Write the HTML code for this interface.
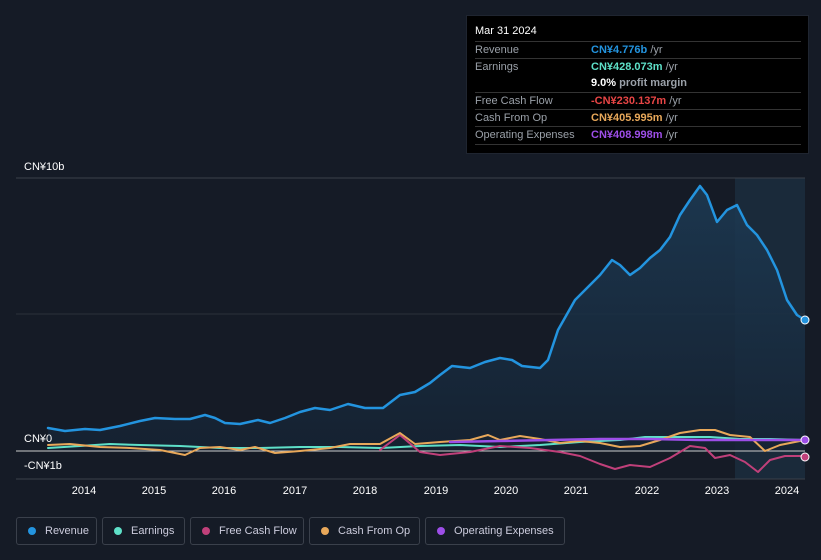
<!DOCTYPE html>
<html><head><meta charset="utf-8"><style>
body{margin:0;background:#151b26;width:821px;height:560px;overflow:hidden;font-family:"Liberation Sans",sans-serif;position:relative}
.tip{position:absolute;left:466px;top:15px;width:343px;height:139px;background:#000;border:1px solid #1f2530;box-sizing:border-box}
.tip .d{position:absolute;left:8px;top:9px;color:#fff;font-size:11px}
.row{position:absolute;left:8px;width:326px;height:17px;border-top:1px solid #333;font-size:11px;color:#9aa0a8;line-height:16px}
.row span{position:absolute;left:116px}
.leg{position:absolute;top:517px;height:28px;border:1px solid #3a404b;border-radius:3px;box-sizing:border-box;color:#ccd;font-size:11px;line-height:26px;padding-left:28px}
.leg i{position:absolute;left:11px;top:9px;width:8px;height:8px;border-radius:50%}
.ax{position:absolute;color:#fff;font-size:11px}
.yr{position:absolute;top:485px;color:#fff;font-size:11px;width:40px;text-align:center}
</style></head><body>
<svg width="821" height="560" style="position:absolute;left:0;top:0">
<defs><linearGradient id="g" x1="0" y1="0" x2="0" y2="1"><stop offset="0" stop-color="#1d3b55"/><stop offset="1" stop-color="#152232"/></linearGradient></defs>
<rect x="735" y="178" width="70" height="301" fill="#1a2a3a"/>
<line x1="16" y1="178" x2="805" y2="178" stroke="#3a404b"/>
<line x1="16" y1="314" x2="805" y2="314" stroke="#2a303b"/>
<line x1="16" y1="479" x2="805" y2="479" stroke="#3a404b"/>
<path d="M48,428 L65,431 85,429 100,430 120,426 140,421 155,418 175,419 190,419 205,415 215,418 225,423 240,424 258,420 270,423 285,418 300,412 315,408 330,410 348,404 365,408 383,408 400,395 415,392 430,383 440,375 452,366 470,368 485,362 500,358 512,360 522,366 540,368 548,360 558,330 575,300 590,285 600,275 612,260 620,265 630,275 640,268 650,258 660,250 670,237 680,215 690,200 700,186 707,195 717,222 727,210 737,205 747,225 757,235 767,250 777,270 787,300 797,315 805,320 L805,451 48,451Z" fill="url(#g)" opacity="0.85"/>
<line x1="16" y1="451" x2="805" y2="451" stroke="#ccc"/>
<g stroke-linejoin="round" stroke-linecap="round" fill="none">
<path d="M48,428 L65,431 85,429 100,430 120,426 140,421 155,418 175,419 190,419 205,415 215,418 225,423 240,424 258,420 270,423 285,418 300,412 315,408 330,410 348,404 365,408 383,408 400,395 415,392 430,383 440,375 452,366 470,368 485,362 500,358 512,360 522,366 540,368 548,360 558,330 575,300 590,285 600,275 612,260 620,265 630,275 640,268 650,258 660,250 670,237 680,215 690,200 700,186 707,195 717,222 727,210 737,205 747,225 757,235 767,250 777,270 787,300 797,315 805,320" stroke="#2394df" stroke-width="2.5"/>
<path d="M48,448 L80,446 110,444 140,445 180,446 220,448 260,448 300,447 340,447 380,448 420,446 460,445 500,447 540,445 580,442 620,440 645,437 680,437 710,437 740,439 770,439 805,440" stroke="#5ee0c8" stroke-width="2"/>
<path d="M380,450 L400,435 420,452 440,455 470,452 500,446 530,448 560,452 580,456 600,464 615,469 630,465 650,467 670,458 690,446 705,448 715,458 730,455 745,462 758,472 770,460 785,456 805,456" stroke="#c0407a" stroke-width="2"/>
<path d="M48,445 L70,444 100,447 130,448 160,450 185,455 200,448 220,447 240,450 255,447 275,453 300,451 330,448 350,444 380,444 400,433 415,444 440,442 470,440 488,435 500,440 520,436 540,439 560,443 580,441 600,443 620,447 640,446 660,440 680,433 700,430 715,430 730,435 750,437 765,451 780,445 805,440" stroke="#e8a85a" stroke-width="2"/>
<path d="M450,442 L500,441 550,440 600,439 650,439 700,440 750,440 805,440" stroke="#9d4ee8" stroke-width="2.5"/>
</g>
<circle cx="805" cy="320" r="4" fill="#2394df" stroke="#fff"/>
<circle cx="805" cy="440" r="4" fill="#9d4ee8" stroke="#fff"/>
<circle cx="805" cy="457" r="4" fill="#c0407a" stroke="#fff"/>
</svg>
<div class="ax" style="left:24px;top:161px">CN¥10b</div>
<div class="ax" style="left:24px;top:433px">CN¥0</div>
<div class="ax" style="left:24px;top:460px">-CN¥1b</div>
<div class="yr" style="left:64px">2014</div><div class="yr" style="left:134px">2015</div><div class="yr" style="left:204px">2016</div><div class="yr" style="left:275px">2017</div><div class="yr" style="left:345px">2018</div><div class="yr" style="left:416px">2019</div><div class="yr" style="left:486px">2020</div><div class="yr" style="left:556px">2021</div><div class="yr" style="left:627px">2022</div><div class="yr" style="left:697px">2023</div><div class="yr" style="left:767px">2024</div>
<div class="tip"><div class="d">Mar 31 2024</div>
<div class="row" style="top:25px">Revenue<span style="color:#2394df;font-weight:bold">CN¥4.776b <b style="color:#9aa0a8;font-weight:normal">/yr</b></span></div>
<div class="row" style="top:42px">Earnings<span style="color:#5ee0c8;font-weight:bold">CN¥428.073m <b style="color:#9aa0a8;font-weight:normal">/yr</b></span></div>
<div class="row" style="top:59px;border:none"><span style="color:#fff;font-weight:bold">9.0% <b style="color:#9aa0a8">profit margin</b></span></div>
<div class="row" style="top:76px">Free Cash Flow<span style="color:#e84545;font-weight:bold">-CN¥230.137m <b style="color:#9aa0a8;font-weight:normal">/yr</b></span></div>
<div class="row" style="top:93px">Cash From Op<span style="color:#e8a85a;font-weight:bold">CN¥405.995m <b style="color:#9aa0a8;font-weight:normal">/yr</b></span></div>
<div class="row" style="top:110px;border-bottom:1px solid #333">Operating Expenses<span style="color:#9d4ee8;font-weight:bold">CN¥408.998m <b style="color:#9aa0a8;font-weight:normal">/yr</b></span></div>
</div>
<div class="leg" style="left:16px;width:81px"><i style="background:#2394df"></i>Revenue</div>
<div class="leg" style="left:102px;width:83px"><i style="background:#5ee0c8"></i>Earnings</div>
<div class="leg" style="left:190px;width:114px"><i style="background:#c0407a"></i>Free Cash Flow</div>
<div class="leg" style="left:309px;width:111px"><i style="background:#e8a85a"></i>Cash From Op</div>
<div class="leg" style="left:425px;width:140px"><i style="background:#9d4ee8"></i>Operating Expenses</div>
</body></html>
